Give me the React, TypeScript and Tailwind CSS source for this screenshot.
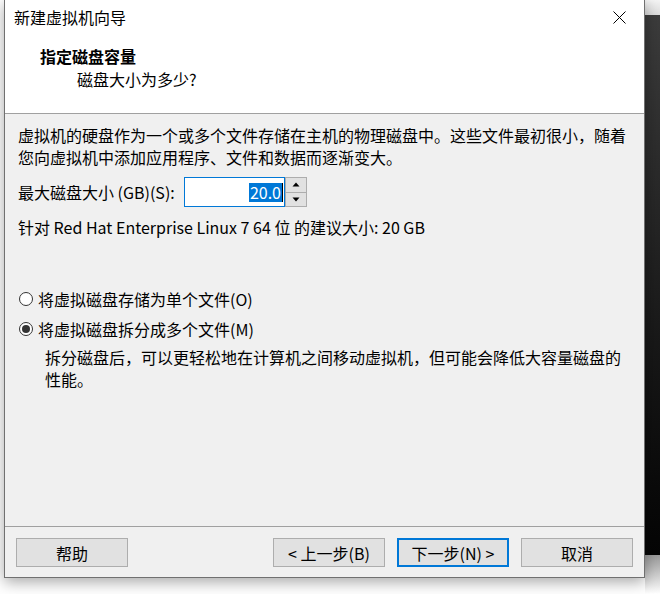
import { useState } from 'react';

const font = { fontFamily: '"Noto Sans CJK SC", "Noto Sans", sans-serif' };

function WinButton({ label, primary }: { label: string; primary?: boolean }) {
  return (
    <button
      className={
        'h-[29px] w-[112px] bg-[#e1e1e1] text-[16px] text-black leading-none flex items-center justify-center ' +
        (primary ? 'border-2 border-[#0078d7]' : 'border border-[#adadad]')
      }
    >
      {label}
    </button>
  );
}

function Radio({ checked, label, onClick }: { checked: boolean; label: string; onClick: () => void }) {
  return (
    <div className="flex items-center h-[22px] cursor-default" onClick={onClick}>
      <span className="w-[14px] h-[14px] rounded-full border border-[#333] bg-white flex items-center justify-center">
        {checked && <span className="w-[8px] h-[8px] rounded-full bg-[#333]" />}
      </span>
      <span className="ml-[5px]">{label}</span>
    </div>
  );
}

export default function App() {
  const [split, setSplit] = useState(true);

  return (
    <div className="w-[660px] h-[594px] bg-white flex overflow-hidden text-black" style={font}>
      <div className="w-[4px] shrink-0" />

      {/* Dialog */}
      <div className="w-[641px] h-[578px] shrink-0 flex flex-col border-x border-b border-[#707070] shadow-[0_4px_14px_rgba(0,0,0,0.35)] bg-[#f0f0f0] relative z-10">
        {/* Header */}
        <div className="h-[114px] bg-white border-b border-[#a0a0a0] flex flex-col">
          <div className="h-[34px] flex items-center justify-between pl-[9px] pr-[16px] text-[16px]">
            <span>新建虚拟机向导</span>
            <svg width="13" height="13" viewBox="0 0 13 13" className="mr-[2px]">
              <path d="M0.5 0.5 L12.5 12.5 M12.5 0.5 L0.5 12.5" stroke="#000" strokeWidth="1" />
            </svg>
          </div>
          <div className="pl-[35px] mt-[11px] h-[22px] flex items-center text-[16px] font-bold">指定磁盘容量</div>
          <div className="pl-[72px] mt-[1px] h-[22px] flex items-center text-[16px]">磁盘大小为多少?</div>
        </div>

        {/* Body */}
        <div className="flex-1 pl-[13px] pt-[10px] text-[16px]">
          <div className="leading-[22px] whitespace-nowrap">
            虚拟机的硬盘作为一个或多个文件存储在主机的物理磁盘中。这些文件最初很小，随着
            <br />
            您向虚拟机中添加应用程序、文件和数据而逐渐变大。
          </div>

          <div className="mt-[9px] flex items-center h-[30px]">
            <span className="w-[166px]">最大磁盘大小 (GB)(S):</span>
            <div className="w-[101px] h-[30px] border border-[#0078d7] bg-white flex items-center justify-end pr-[1px]">
              <span className="bg-[#0078d7] text-white leading-[19px] px-[1px]">20.0</span>
              <span className="w-[1px] h-[19px] bg-black" />
            </div>
            <div className="w-[22px] h-[30px] flex flex-col">
              <div className="flex-1 border border-[#adadad] bg-[#e1e1e1] flex items-center justify-center">
                <svg width="8" height="5" viewBox="0 0 8 5">
                  <path d="M4 0.5 L7.5 4.5 L0.5 4.5 Z" fill="#000" />
                </svg>
              </div>
              <div className="flex-1 border border-t-0 border-[#adadad] bg-[#e1e1e1] flex items-center justify-center">
                <svg width="8" height="5" viewBox="0 0 8 5">
                  <path d="M0.5 0.5 L7.5 0.5 L4 4.5 Z" fill="#000" />
                </svg>
              </div>
            </div>
          </div>

          <div className="mt-[9px] leading-[22px]">针对 Red Hat Enterprise Linux 7 64 位 的建议大小: 20 GB</div>

          <div className="mt-[50px] pl-[1px]">
            <Radio checked={!split} label="将虚拟磁盘存储为单个文件(O)" onClick={() => setSplit(false)} />
          </div>
          <div className="mt-[8px] pl-[1px]">
            <Radio checked={split} label="将虚拟磁盘拆分成多个文件(M)" onClick={() => setSplit(true)} />
          </div>
          <div className="mt-[6px] pl-[27px] leading-[22px] whitespace-nowrap">
            拆分磁盘后，可以更轻松地在计算机之间移动虚拟机，但可能会降低大容量磁盘的
            <br />
            性能。
          </div>
        </div>

        {/* Footer */}
        <div className="h-[51px] border-t border-[#a0a0a0] flex items-start pt-[11px] px-[11px]">
          <WinButton label="帮助" />
          <div className="flex-1" />
          <div className="flex gap-[12px]">
            <WinButton label="< 上一步(B)" />
            <WinButton label="下一步(N) >" primary />
            <WinButton label="取消" />
          </div>
        </div>
      </div>

      {/* Background window to the right */}
      <div className="flex-1 flex flex-col">
        <div className="h-[15px] bg-gradient-to-b from-[#f4f4f4] to-[#dcdcdc]" />
        <div className="h-[540px] bg-gradient-to-b from-[#3c3c3c] to-[#050505]" />
        <div className="flex-1 bg-gradient-to-b from-[#9a9a9a] to-white" />
      </div>
    </div>
  );
}
